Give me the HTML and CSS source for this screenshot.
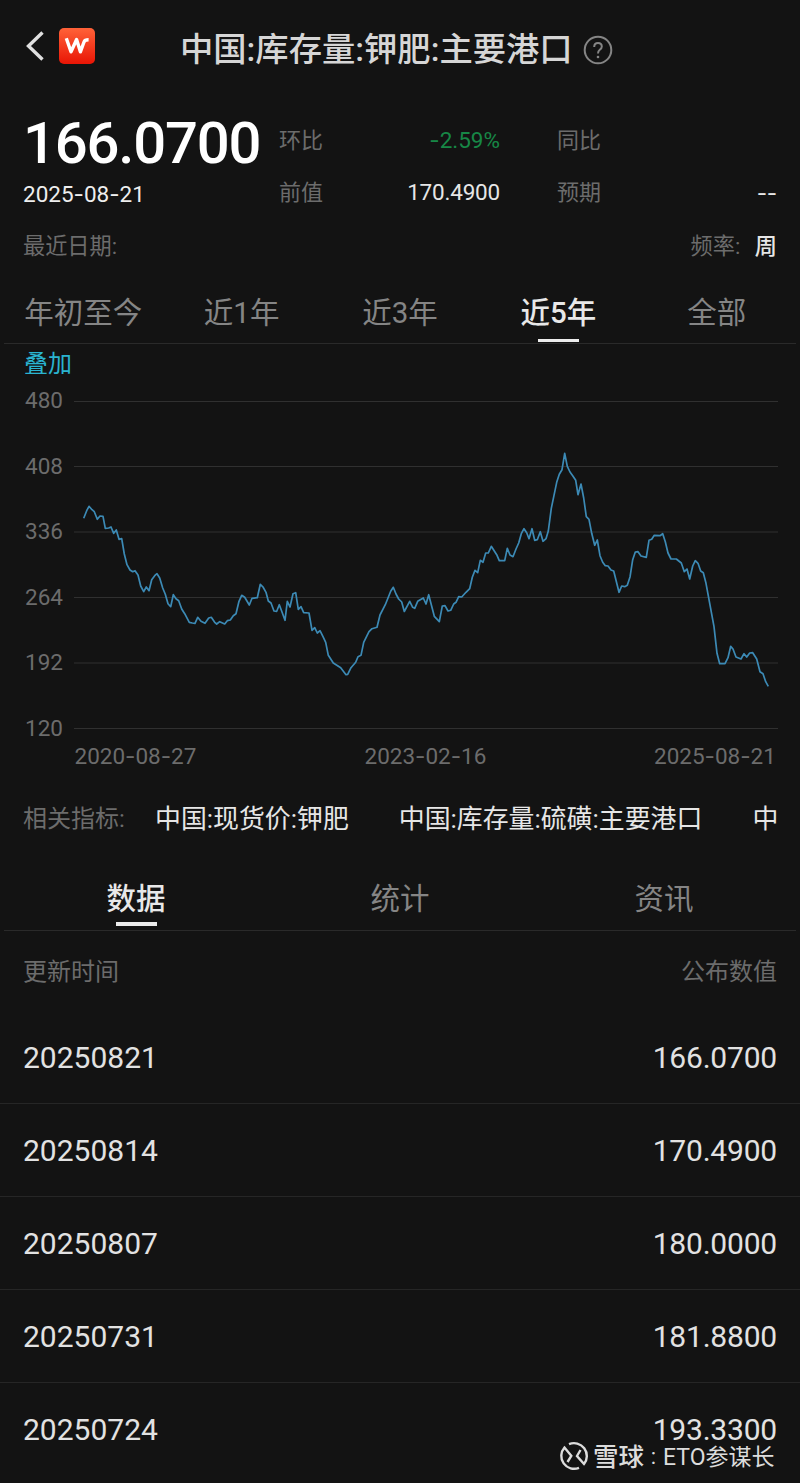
FILE: index.html
```html
<!DOCTYPE html>
<html lang="zh-CN">
<head>
  <meta charset="UTF-8" />
  <title>中国:库存量:钾肥:主要港口</title>
  <meta name="viewport" content="width=device-width, initial-scale=1.0" />
  <link rel="stylesheet" href="styles.css">
</head>
<body>
<header class="topbar">
  <svg class="back" width="20" height="32" viewBox="0 0 20 32"><path d="M18.5 2.5 L4.5 16 L18.5 29.5" /></svg>
  <svg class="logo" width="36" height="36" viewBox="0 0 36 36">
    <defs>
      <linearGradient id="logoBg" x1="0" y1="0" x2="0" y2="1">
        <stop offset="0" stop-color="#ff6238" />
        <stop offset="1" stop-color="#e91505" />
      </linearGradient>
    </defs>
    <rect width="36" height="36" rx="5" fill="url(#logoBg)" />
    <path class="logo-mark" d="M7.3 10.3 L12 23.8 L17.6 11.5 L21.4 23.8 L25 14 Q25.8 11.8 29.6 11.8" />
  </svg>
  <h1 class="title">中国:库存量:钾肥:主要港口</h1>
  <svg class="help" width="30" height="30" viewBox="0 0 30 30">
    <circle cx="15" cy="15" r="13.3" />
    <path d="M11.2 12 Q11.2 8 15 8 Q18.8 8 18.8 11.6 Q18.8 13.4 16.8 14.8 Q15 16.2 15 18.6" />
    <circle class="help-dot" cx="15" cy="22" r="1.3" />
  </svg>
</header>

<section class="summary">
  <div class="latest">
    <div class="latest-value">166.0700</div>
    <div class="latest-date">2025<span class="dash">-</span>08<span class="dash">-</span>21</div>
  </div>
  <div class="stats">
    <div class="stat"><span class="label">环比</span><span class="num down"><span class="dash">-</span>2.59%</span></div>
    <div class="stat"><span class="label">同比</span><span class="num"></span></div>
    <div class="stat"><span class="label">前值</span><span class="num">170.4900</span></div>
    <div class="stat"><span class="label">预期</span><span class="num dash">--</span></div>
  </div>
</section>

<div class="meta">
  <span>最近日期:</span>
  <span>频率: <b class="freq">周</b></span>
</div>

<nav class="tabs range">
  <a class="tab">年初至今</a>
  <a class="tab">近1年</a>
  <a class="tab">近3年</a>
  <a class="tab active">近5年</a>
  <a class="tab">全部</a>
</nav>

<a class="overlay">叠加</a>

<svg class="chart" width="800" height="395" viewBox="0 385 800 395">
  <g class="grid">
    <path d="M74 401.5H778" />
    <path d="M74 466.5H778" />
    <path d="M74 532H778" />
    <path d="M74 597.5H778" />
    <path d="M74 663H778" />
    <path d="M74 728.5H778" />
  </g>
  <g class="axis">
    <text x="25" y="408.4" textLength="38">480</text>
    <text x="25" y="474" textLength="38">408</text>
    <text x="25" y="539.4" textLength="38">336</text>
    <text x="25" y="605" textLength="38">264</text>
    <text x="25" y="670.4" textLength="38">192</text>
    <text x="25" y="736" textLength="38">120</text>
    <text x="74.5" y="764">2020<tspan class="dash">-</tspan>08<tspan class="dash">-</tspan>27</text>
    <text x="364.5" y="764">2023<tspan class="dash">-</tspan>02<tspan class="dash">-</tspan>16</text>
    <text x="654" y="764">2025<tspan class="dash">-</tspan>08<tspan class="dash">-</tspan>21</text>
  </g>
  <polyline class="series" points="
    83.7,518.3 86.7,510.7 89,506.3 92,509.7 94.3,511.7 97.3,519.3 100,516 103,516.3 105.3,528.3 108.7,528
    111,527 113.7,533.3 116.3,530 119,539.3 121.7,538.7 124.3,554 127,564.7 130,570 132.7,571.7 135,570.7
    138,575 140.7,586 143.7,591.7 146.3,587 149,590.7 151.7,579.7 154.7,575.7 157,573.7 159.7,578 162.7,588
    165.3,594.3 168,603.7 170.7,606.7 173.3,594.7 176,598.7 178.7,600.7 181.7,609 184.7,613.7 189.3,622.3
    192.3,623 195,623.3 197.7,617.3 201,621.3 205,623.3 208.7,618 211.3,617.3 214.7,622.3 216.7,624
    219.7,621.7 224.7,624 227.3,620.7 230.3,620 233.3,615.7 236,613.7 239,601.3 241.7,595.3 244.7,597.3
    249.3,605 252,598.3 257.3,597.7 260.3,584.3 263,587 266,592.3 268.3,601 271,603 274,611 276.7,611.3
    279.3,604.7 282,612 285,620.3 287.3,601.3 290,607 293,593.7 295.7,592.7 298.3,609.3 301,606.7
    303.7,612.7 309,613 312,630.3 314.7,627.7 317.3,633 320,630.7 323,636.7 325.7,642.3 328.3,655.3
    333.3,663 340.7,667.7 346,674.7 347.7,674.3 351,667.7 355.7,662.3 358,656.7 361,655.3 363.7,642.3
    369,631.7 372,628.7 377,627.3 380,615 385.3,604.7 390.7,591.3 393.3,587.3 396,594 398.7,599 401.7,602
    404.3,611.5 409.7,601.3 412.7,607.3 414.7,608.3 417.7,601.3 423.3,598 426,604 428.7,594.7 434.3,616.3
    439.3,621.7 442.3,606 445,605.7 448,611 450.7,610.3 453.7,604 456,602.3 458.7,596.7 461.7,597
    466,592.3 469.7,588.7 472.3,577.3 475,570.3 477.7,572.7 480.3,560.3 483,562.3 485.7,553 488.3,553
    491.3,546.3 496.7,554.7 499.3,560.7 504.7,560.7 507.3,548.3 510,555 513,556.7 516,549 518.7,543
    521.3,533.7 524,528.7 526.7,532.7 529,538.7 532,528.7 534.7,540.3 537.3,539.7 540.3,531.7 543,541.3
    546,538.7 548.3,531 551.3,508.3 556.7,482.3 559.3,474.3 562,469.7 564.7,453.3 567.3,466.3 570,472
    572.7,475.7 575.7,480.3 578,494.7 581,484 583.7,498 586.3,516.7 589,519.3 591.7,533.3 594.7,545.3
    597.3,540 600,555.7 602.7,562.3 605.3,565.7 608,566 611,570 613.7,571 619,592.3 621.7,586 624.7,586.7
    627.3,585.3 630,577 632.7,559.7 635.3,552 638,551.7 641,556 646.3,557.3 649,540.3 651.7,539.3
    654.3,535.3 660,535.7 662.7,533.7 665.3,541.7 668,553 671,559 676.3,559 681.3,563 684.3,571.7 687,569
    689.7,579 692.7,566 695.3,560.7 698,563.3 700.7,571 703.3,572.7 706,583.3 714,626.7 717,653.3
    719.7,663.7 725,663.7 728,657.7 730.7,646.3 733,649 736,657 741,659 744,653.7 746.7,657 749.7,653
    752.7,652.7 756.7,659 760,671.7 763,673.7 765.7,681.7 768.3,686.3" />
</svg>

<div class="related">
  <span class="related-label">相关指标:</span>
  <div class="related-list">
    <a>中国:现货价:钾肥</a>
    <a>中国:库存量:硫磺:主要港口</a>
    <a>中</a>
  </div>
</div>

<nav class="tabs detail">
  <a class="tab active">数据</a>
  <a class="tab">统计</a>
  <a class="tab">资讯</a>
</nav>

<div class="table">
  <div class="thead"><span>更新时间</span><span>公布数值</span></div>
  <div class="row"><span>20250821</span><span class="value">166.0700</span></div>
  <div class="row"><span>20250814</span><span class="value">170.4900</span></div>
  <div class="row"><span>20250807</span><span class="value">180.0000</span></div>
  <div class="row"><span>20250731</span><span class="value">181.8800</span></div>
  <div class="row"><span>20250724</span><span class="value">193.3300</span></div>
</div>

<div class="watermark">
  <svg width="32" height="30" viewBox="0 0 32 30">
    <path d="M11 3.2 A12.8 12.8 0 0 1 26 23 L19 15 L22.5 9" />
    <path d="M21 26.8 A12.8 12.8 0 0 1 6.5 6.5 L13.3 14.8 L9.5 21" />
  </svg>
  <span class="brand">雪球</span><span class="sep">:</span><span class="author">ETO参谋长</span>
</div>
</body>
</html>
```
FILE: styles.css
```css
* {
  box-sizing: border-box;
}
body {
  margin: 0;
  width: 800px;
  height: 1483px;
  position: relative;
  overflow: hidden;
  background: #131313;
  color: #e2e2e2;
  font-family: Roboto, "Noto Sans CJK SC", sans-serif;
}
svg {
  display: block;
  flex: none;
}
/* wider hyphen than the one in Roboto */
.dash {
  font-family: Inter, sans-serif;
}
.topbar {
  display: flex;
  align-items: center;
  height: 98px;
  padding: 0 24px;
}
.back {
  margin-bottom: 6px;
}
.back path {
  fill: none;
  stroke: #e0e0e0;
  stroke-width: 3.4;
}
.logo {
  margin: 0 86px 6px 15px;
}
.logo-mark {
  fill: none;
  stroke: #fff;
  stroke-width: 3.4;
  stroke-linejoin: round;
}
.title {
  margin: 2px 0 0 -1px;
  font-size: 33.3px;
  font-weight: 500;
  line-height: 40px;
  color: #d6d6d6;
  white-space: nowrap;
}
.help {
  margin: 1px 0 0 10px;
}
.help circle,
.help path {
  fill: none;
  stroke: #858585;
  stroke-width: 2;
}
.help .help-dot {
  fill: #858585;
  stroke: none;
}

.summary {
  display: flex;
  height: 122px;
  padding: 0 23px;
}
.latest {
  width: 256px;
}
.latest-value {
  height: 86px;
  line-height: 91px;
  font-size: 58px;
  font-weight: 500;
  letter-spacing: -1.2px;
  color: #fff;
}
.latest-date {
  font-size: 22.5px;
  line-height: 20px;
  color: #eee;
}
.stats {
  flex: 1;
  display: grid;
  grid-template-columns: 221px 220px;
  grid-template-rows: 52px 52px;
  column-gap: 57px;
  padding-top: 16px;
}
.stat {
  display: flex;
  justify-content: space-between;
  align-items: center;
  font-size: 22px;
}
.label {
  margin-bottom: 4px;
  color: #6c6c6c;
}
.num {
  font-size: 22.5px;
  letter-spacing: -0.2px;
  color: #e6e6e6;
}
.num.down {
  margin-bottom: 2px;
  letter-spacing: 0;
  color: #178746;
}
.meta {
  display: flex;
  justify-content: space-between;
  align-items: center;
  height: 52px;
  padding: 0 23px 4px;
  font-size: 22.2px;
  color: #6c6c6c;
}
.freq {
  margin-left: 9px;
  font-weight: 500;
  color: #e6e6e6;
}

.tabs {
  display: flex;
  margin: 0 4px;
  border-bottom: 1px solid #2a2a2a;
}
.tab {
  flex: 1;
  display: flex;
  flex-direction: column;
  align-items: center;
  font-size: 29.5px;
  color: #858585;
}
.tab.active {
  color: #e8e8e8;
  font-weight: 500;
}
.tab.active::after {
  content: "";
  width: 41px;
  height: 3px;
  background: #ececec;
}
.range {
  height: 72px;
}
.range .tab {
  padding-top: 13px;
  line-height: 56px;
}
.range .active::after {
  margin-top: -2px;
}
.detail {
  height: 78px;
}
.detail .tab {
  padding-top: 24px;
  line-height: 44px;
}
.detail .active::after {
  height: 4px;
  margin-top: 1px;
}

.overlay {
  display: block;
  height: 41px;
  padding-left: 24px;
  font-size: 24px;
  line-height: 41px;
  color: #2ab4d0;
}
.grid path {
  stroke: #303030;
  stroke-width: 1;
}
.axis text {
  font-size: 22.5px;
  fill: #6c6c6c;
}
.series {
  fill: none;
  stroke: #3c8ab5;
  stroke-width: 1.7;
  stroke-linejoin: round;
}

.related {
  display: flex;
  align-items: center;
  height: 73px;
  padding: 4px 20px 0 23px;
  line-height: 40px;
}
.related-label {
  width: 132px;
  flex: none;
  font-size: 24px;
  color: #6c6c6c;
}
.related-list {
  display: flex;
  gap: 50px;
  overflow: hidden;
  white-space: nowrap;
  font-size: 25.9px;
  color: #e6e6e6;
}

.thead,
.row {
  display: flex;
  justify-content: space-between;
  align-items: center;
  padding: 0 23px;
}
.thead {
  height: 80px;
  padding-bottom: 4px;
  font-size: 24px;
  color: #6c6c6c;
}
.row {
  height: 93px;
  font-size: 30px;
  border-bottom: 1px solid #262626;
}
.row:last-child {
  border-bottom: 0;
}
.value {
  letter-spacing: -0.2px;
}

.watermark {
  position: absolute;
  left: 558px;
  top: 1441px;
  display: flex;
  align-items: center;
  height: 30px;
  color: #dcdcdc;
  white-space: nowrap;
}
.watermark path {
  fill: none;
  stroke: #dcdcdc;
  stroke-width: 2.4;
}
.brand {
  margin: -3px 0 0 3px;
  font-size: 25.5px;
  font-weight: 500;
}
.sep {
  width: 19px;
  text-align: center;
  font-size: 22px;
}
.author {
  margin-top: -3px;
  font-size: 23px;
}
```
